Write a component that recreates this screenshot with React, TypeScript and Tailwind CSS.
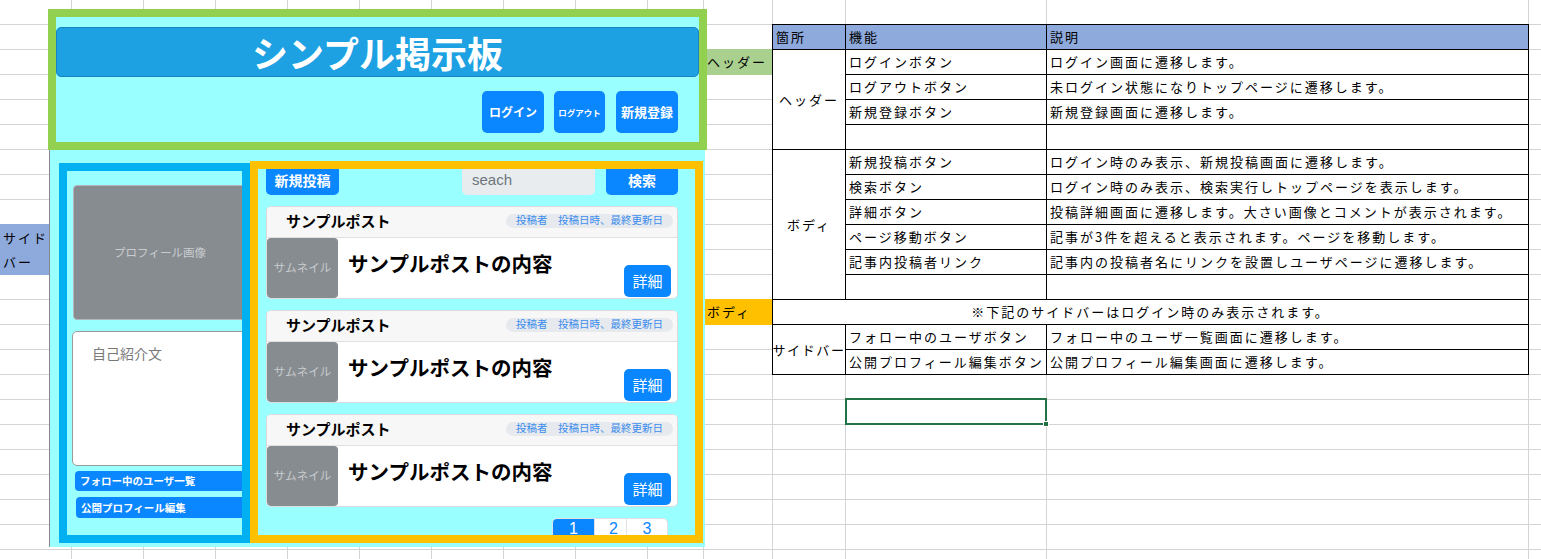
import React from 'react';

const JP = "font-['Noto_Sans_CJK_JP',sans-serif]";
const SHEET_COLS = 'grid-cols-[repeat(9,72px)_56px_69px_73px_201px_482px_80px]';

const HEADER_ROWS = [
  ['ログインボタン', 'ログイン画面に遷移します。'],
  ['ログアウトボタン', '未ログイン状態になりトップページに遷移します。'],
  ['新規登録ボタン', '新規登録画面に遷移します。'],
  ['', ''],
];

const BODY_ROWS = [
  ['新規投稿ボタン', 'ログイン時のみ表示、新規投稿画面に遷移します。'],
  ['検索ボタン', 'ログイン時のみ表示、検索実行しトップページを表示します。'],
  ['詳細ボタン', '投稿詳細画面に遷移します。大さい画像とコメントが表示されます。'],
  ['ページ移動ボタン', '記事が3件を超えると表示されます。ページを移動します。'],
  ['記事内投稿者リンク', '記事内の投稿者名にリンクを設置しユーザページに遷移します。'],
  ['', ''],
];

const SIDEBAR_ROWS = [
  ['フォロー中のユーザボタン', 'フォロー中のユーザ一覧画面に遷移します。'],
  ['公開プロフィール編集ボタン', '公開プロフィール編集画面に遷移します。'],
];

const cell = 'border-r border-b border-black flex items-center pl-[3px] whitespace-nowrap';

function Pairs({ rows }: { rows: string[][] }) {
  return (
    <>
      {rows.map(([fn, desc], i) => (
        <React.Fragment key={i}>
          <div className={cell}>{fn}</div>
          <div className={cell}>{desc}</div>
        </React.Fragment>
      ))}
    </>
  );
}

function SpecTable() {
  return (
    <div className="col-start-12 col-span-3 row-start-2 row-span-14 -mt-px -ml-px grid grid-cols-[73px_201px_482px] auto-rows-[25px] border-t border-l border-black bg-white text-[13px] tracking-[2px] text-black">
      <div className={`${cell} bg-[#8EA9DB]`}>箇所</div>
      <div className={`${cell} bg-[#8EA9DB]`}>機能</div>
      <div className={`${cell} bg-[#8EA9DB]`}>説明</div>

      <div className="row-span-4 border-r border-b border-black flex items-center justify-center">ヘッダー</div>
      <Pairs rows={HEADER_ROWS} />

      <div className="row-span-6 border-r border-b border-black flex items-center justify-center">ボディ</div>
      <Pairs rows={BODY_ROWS} />

      <div className="col-span-3 border-r border-b border-black flex items-center justify-center">
        ※下記のサイドバーはログイン時のみ表示されます。
      </div>

      <div className="row-span-2 border-r border-b border-black flex items-center justify-center whitespace-nowrap tracking-[1.6px]">
        サイドバー
      </div>
      <Pairs rows={SIDEBAR_ROWS} />
    </div>
  );
}

function PostCard() {
  return (
    <div className="h-[93px] flex flex-col rounded-[5px] border border-[#dcdcdc] bg-white overflow-hidden">
      <div className="h-[31px] shrink-0 flex items-center justify-between border-b border-[#e2e2e2] bg-[#f7f7f7] pl-[19px] pr-[4px] pb-[3px]">
        <span className="text-[15px] font-bold text-black leading-none">サンプルポスト</span>
        <span className="h-[14px] flex items-center rounded-full bg-[#e6eaee] px-[10px] text-[10.5px] leading-none text-[#3d8ded]">
          投稿者　投稿日時、最終更新日
        </span>
      </div>
      <div className="flex-1 flex">
        <div className="w-[71px] shrink-0 flex items-center justify-center rounded-[4px] bg-[#878c91] text-[11.5px] text-[#c9cccf]">
          サムネイル
        </div>
        <div className="flex-1 pl-[10px] pt-[12px] text-[20.5px] font-bold leading-[1.3] text-black">
          サンプルポストの内容
        </div>
        <button className="self-end mb-[1px] mr-[6px] w-[47px] h-[32px] rounded-[5px] bg-[#0a86ff] text-[15px] text-white">
          詳細
        </button>
      </div>
    </div>
  );
}

function BoardMock() {
  return (
    <div className={`absolute left-[48px] top-[9px] w-[659px] ${JP}`}>
      {/* header block */}
      <div className="h-[141px] flex flex-col border-8 border-[#92D050] bg-[#99FFFF]">
        <div className="mt-[10px] h-[50px] flex items-center justify-center rounded-[5px] border border-[#1783c4] bg-[#1DA1E2]">
          <span className="text-[36px] font-bold leading-none text-white">シンプル掲示板</span>
        </div>
        <div className="mt-[14px] flex justify-end gap-[10px] pr-[21px]">
          <button className="w-[62px] h-[42px] rounded-[5px] bg-[#0a86ff] text-[12px] font-bold text-white">ログイン</button>
          <button className="w-[51px] h-[42px] rounded-[5px] bg-[#0a86ff] text-[8.5px] font-bold text-white">ログアウト</button>
          <button className="ml-px w-[62px] h-[42px] rounded-[5px] bg-[#0a86ff] text-[13px] font-bold text-white">新規登録</button>
        </div>
      </div>

      {/* body block */}
      <div className="ml-px mr-[2px] h-[397px] flex items-end border-l border-[#8a8a8a] bg-[#99FFFF] pl-[9px] pb-[4px]">
        {/* sidebar */}
        <div className="w-[191px] h-[380px] shrink-0 flex flex-col border-8 border-[#00B0F0] bg-[#99FFFF] pl-[6px] pt-[14px] overflow-hidden">
          <div className="w-[174px] h-[135px] shrink-0 flex items-center justify-center rounded-[4px] border border-[#b3b7bb] bg-[#878c91] text-[11.5px] text-[#c9cccf]">
            プロフィール画像
          </div>
          <div className="mt-[11px] -ml-px w-[176px] h-[135px] shrink-0 rounded-[5px] border border-[#9a9a9a] bg-white pl-[19px] pt-[14px] text-[14px] leading-none text-[#7a7a7a]">
            自己紹介文
          </div>
          <div className="mt-[5px] ml-[2px] w-[175px] h-[20px] shrink-0 flex items-center rounded-[4px] bg-[#0a86ff] pl-[5px] text-[10.5px] font-bold text-white">
            フォロー中のユーザ一覧
          </div>
          <div className="mt-[6px] ml-[3px] w-[175px] h-[21px] shrink-0 flex items-center rounded-[4px] bg-[#0a86ff] pl-[5px] text-[10.5px] font-bold text-white">
            公開プロフィール編集
          </div>
        </div>

        {/* main */}
        <div className="w-[453px] h-[382px] shrink-0 flex flex-col border-8 border-[#FFC000] bg-[#99FFFF] overflow-hidden">
          <div className="-mt-[4px] h-[30px] shrink-0 flex items-stretch pl-[8px] pr-[17px]">
            <button className="w-[73px] rounded-[5px] bg-[#0a86ff] text-[14px] font-bold text-white">新規投稿</button>
            <div className="ml-auto w-[133px] flex items-center rounded-[5px] bg-[#e9ecef] pl-[10px] font-['Liberation_Sans',sans-serif] text-[15px] text-[#6c757d]">
              seach
            </div>
            <button className="ml-[11px] w-[72px] rounded-[5px] bg-[#0a86ff] text-[14px] font-bold text-white">検索</button>
          </div>

          <div className="mt-[11px] shrink-0 flex flex-col gap-[11px] pl-[8px] pr-[17px]">
            <PostCard />
            <PostCard />
            <PostCard />
          </div>

          <div className="mt-[11px] shrink-0 flex justify-end pr-[27px]">
            <div className="h-[30px] flex rounded-[5px] border border-[#dee2e6] bg-white overflow-hidden font-['Liberation_Sans',sans-serif] text-[16px] leading-[20px]">
              <span className="w-[41px] text-center bg-[#0a86ff] text-white">1</span>
              <span className="w-[32px] text-center pl-[6px] border-l border-[#dee2e6] text-[#0a86ff]">2</span>
              <span className="w-[41px] text-center border-l border-[#dee2e6] text-[#0a86ff]">3</span>
            </div>
          </div>
        </div>
      </div>
    </div>
  );
}

export default function App() {
  const gridCells = Array.from({ length: 23 * 15 }, (_, i) => (
    <div key={i} className="border-r border-b border-[#d4d4d4]" />
  ));

  return (
    <div className={`relative w-[1541px] h-[559px] overflow-hidden bg-white ${JP}`}>
      <div className="grid">
        {/* sheet gridlines */}
        <div className={`col-start-1 row-start-1 grid ${SHEET_COLS} auto-rows-[25px]`}>{gridCells}</div>

        {/* filled cells, table, selection */}
        <div className={`col-start-1 row-start-1 grid ${SHEET_COLS} auto-rows-[25px] text-[13px] tracking-[2px] text-black`}>
          <div className="col-start-1 row-start-10 row-span-2 -mt-px flex flex-col justify-center bg-[#8EA9DB] pl-[3px] leading-[24px]">
            <span>サイド</span>
            <span>バー</span>
          </div>
          <div className="col-start-11 row-start-3 -mt-px flex items-center bg-[#A9D08E] pl-[3px]">ヘッダー</div>
          <div className="col-start-11 row-start-13 -mt-px flex items-center bg-[#FFC000] pl-[3px]">ボディ</div>

          <SpecTable />

          <div className="relative col-start-13 row-start-17 -mt-[2px] -ml-px border-2 border-[#217346]">
            <span className="absolute -right-[4px] -bottom-[4px] w-[6px] h-[6px] border border-white bg-[#217346]" />
          </div>
        </div>
      </div>

      <BoardMock />
    </div>
  );
}
